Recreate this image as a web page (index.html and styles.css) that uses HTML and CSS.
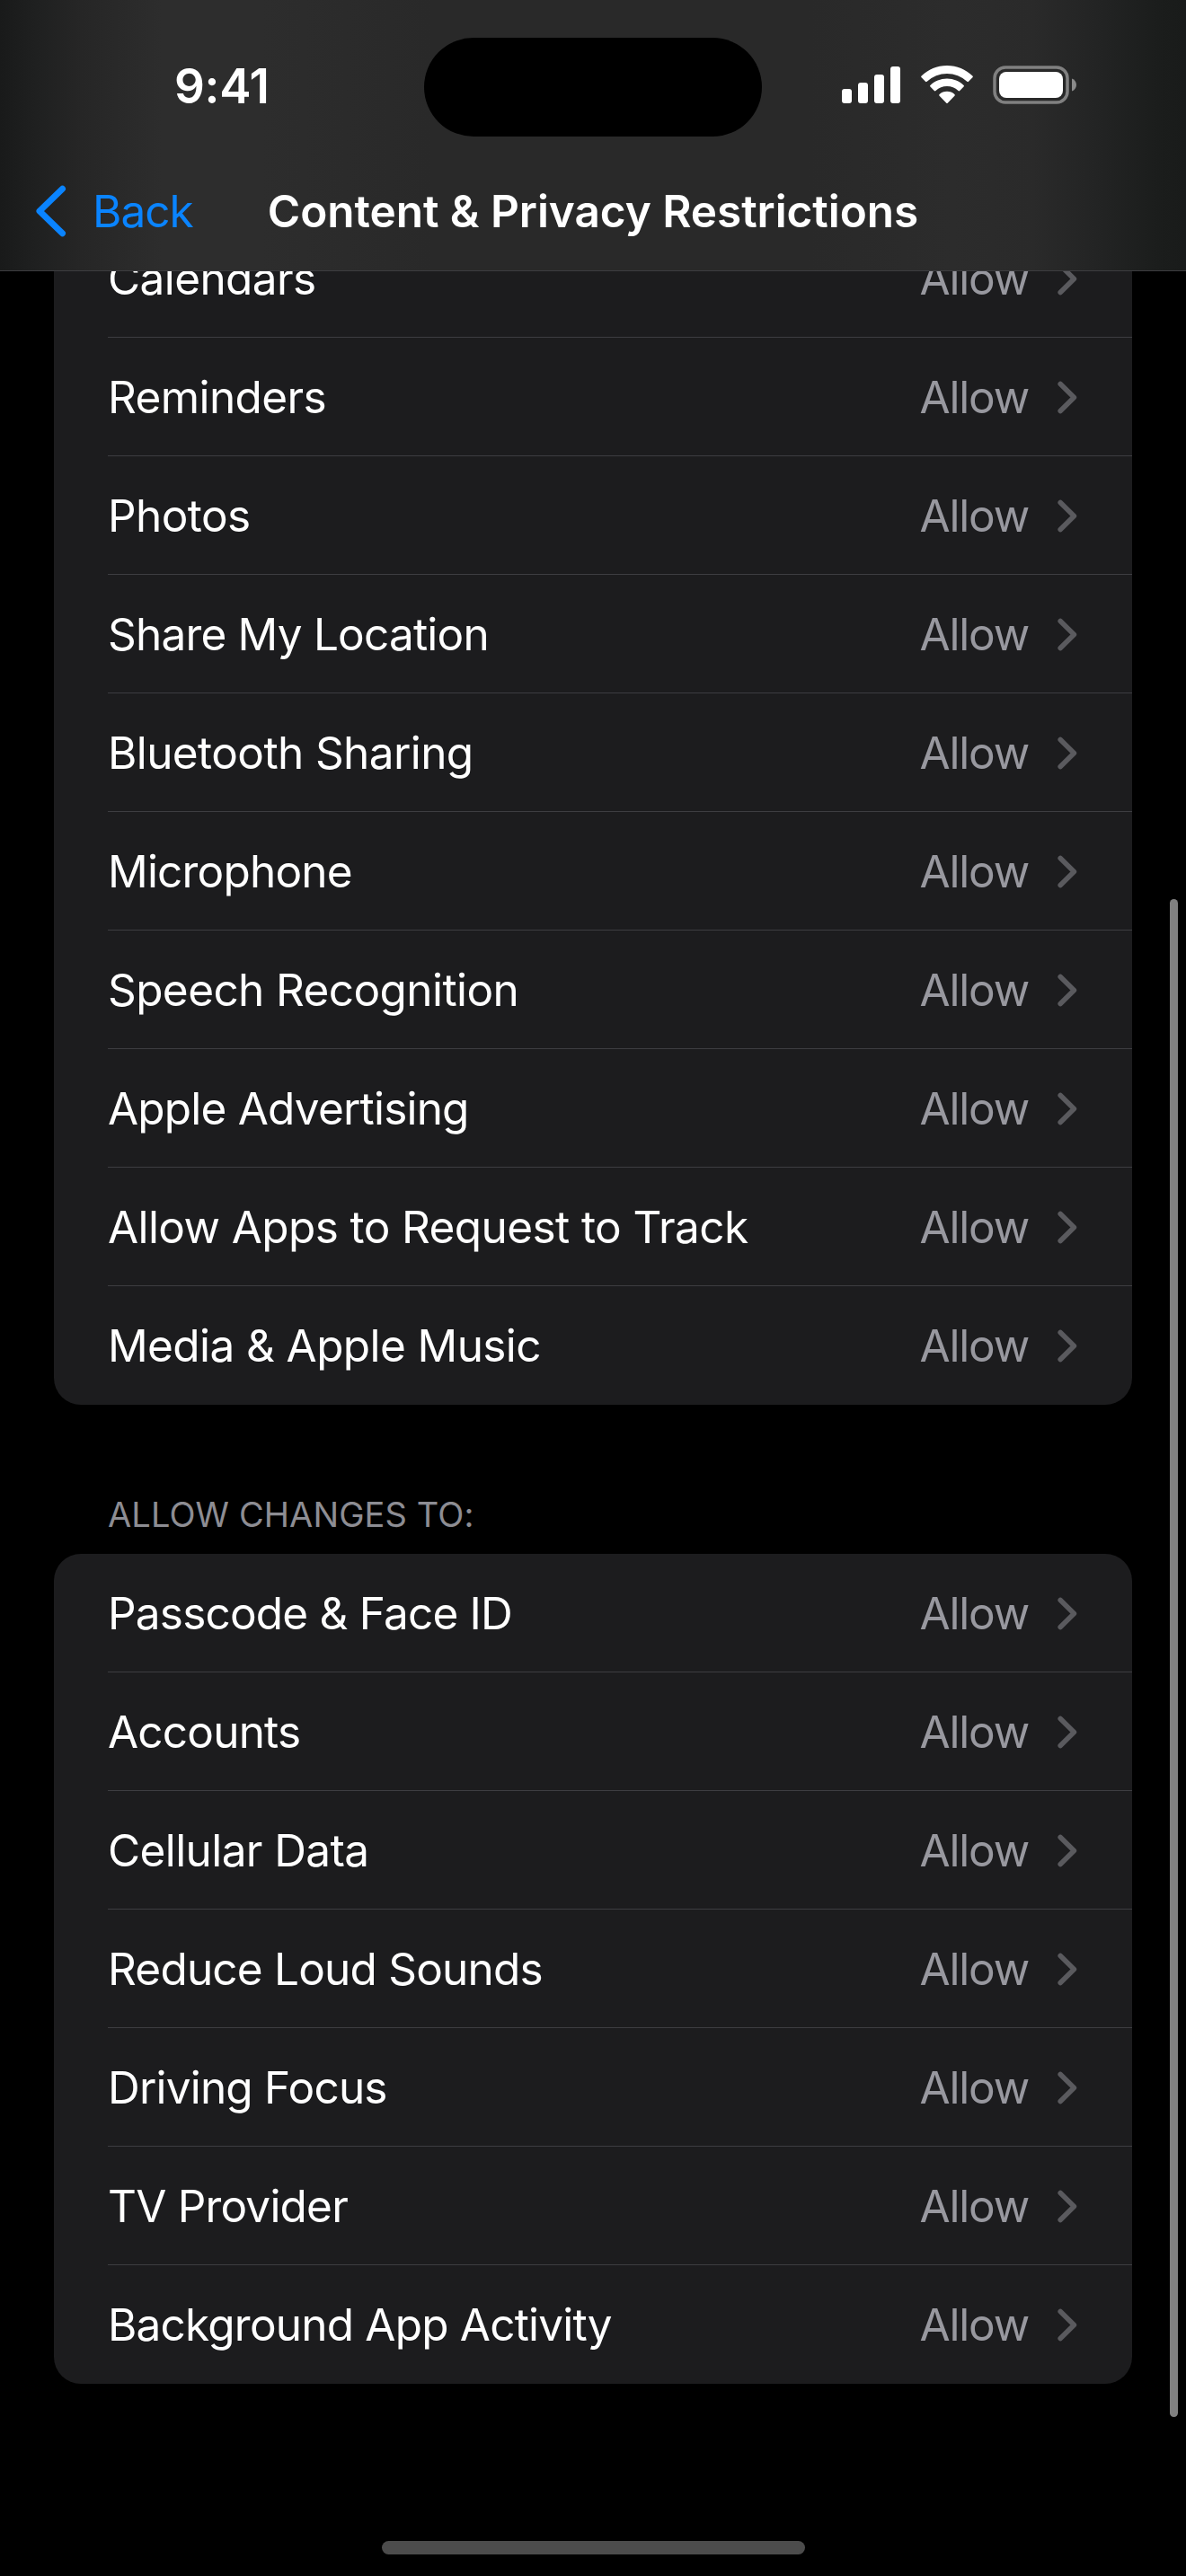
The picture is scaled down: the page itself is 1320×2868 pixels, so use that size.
FILE: index.html
```html
<!DOCTYPE html>
<html lang="en">
<head>
<meta charset="utf-8">
<title>Content &amp; Privacy Restrictions</title>
<link rel="stylesheet" href="styles.css">
</head>
<body>
<svg class="sprite" aria-hidden="true">
  <symbol id="chevron" viewBox="0 0 22 37"><path d="M3.2 3.4 18.400 18.500 3.200 33.600" fill="none" stroke="currentColor" stroke-width="5.600" stroke-linecap="round" stroke-linejoin="round"/></symbol>
</svg>
<div class="screen">
  <header class="header">
    <div class="status">
      <span class="time">9:41</span>
      <span class="island"></span>
      <span class="indicators">
        <svg width="66" height="44" viewBox="0 0 66 44" fill="#fff"><rect x="0" y="26" width="11" height="16" rx="3"/><rect x="18" y="19" width="11" height="23" rx="3"/><rect x="36" y="10" width="11" height="32" rx="3"/><rect x="54" y="1" width="11" height="41" rx="3"/></svg>
        <svg class="wifi" width="58" height="44" viewBox="0 0 58 44" fill="#fff"><path d="M29 0C40 0 50 4.3 57.400 11.600a1.200 1.200 0 0 1 0 1.700L53 17.800a1.200 1.200 0 0 1-1.700 0A32.500 32.500 0 0 0 6.700 17.800a1.200 1.200 0 0 1-1.700 0L.6 13.300a1.200 1.200 0 0 1 0-1.700C8 4.300 18 0 29 0Z"/><path d="M29 14.500C36.200 14.500 42.800 17.300 47.600 21.900a1.200 1.200 0 0 1 0 1.700L43.200 28a1.200 1.200 0 0 1-1.700 0A18.300 18.300 0 0 0 16.500 28a1.200 1.200 0 0 1-1.700 0L10.400 23.600a1.200 1.200 0 0 1 0-1.700C15.200 17.300 21.800 14.500 29 14.500Z"/><path d="M29 28.800c3.300 0 6.200 1.200 8.400 3.100a1.200 1.200 0 0 1 0 1.800L29.900 41.600a1.200 1.200 0 0 1-1.800 0L20.600 33.700a1.200 1.200 0 0 1 0-1.800c2.200-1.900 5.100-3.100 8.400-3.100Z"/></svg>
        <svg width="94" height="44" viewBox="0 0 94 44"><rect x="2" y="2" width="81" height="39" rx="12" fill="none" stroke="#808080" stroke-width="3.500"/><rect x="7" y="7" width="71" height="29" rx="8" fill="#fff"/><path d="M88 14.500c3 1 5 4 5 7s-2 6-5 7Z" fill="#8a8a8a"/></svg>
      </span>
    </div>
    <nav class="nav">
      <a class="back"><svg width="34" height="58" viewBox="0 0 34 58"><path d="M29.500 4.200 4 29 29.500 53.800" fill="none" stroke="currentColor" stroke-width="7" stroke-linecap="round" stroke-linejoin="round"/></svg><span>Back</span></a>
      <h1>Content &amp; Privacy Restrictions</h1>
    </nav>
  </header>
  <main class="content">
    <ul class="card card-top">
      <li><span>Calendars</span><em>Allow</em><svg class="chev"><use href="#chevron"/></svg></li>
      <li><span>Reminders</span><em>Allow</em><svg class="chev"><use href="#chevron"/></svg></li>
      <li><span>Photos</span><em>Allow</em><svg class="chev"><use href="#chevron"/></svg></li>
      <li><span class="tight">Share My Location</span><em>Allow</em><svg class="chev"><use href="#chevron"/></svg></li>
      <li><span>Bluetooth Sharing</span><em>Allow</em><svg class="chev"><use href="#chevron"/></svg></li>
      <li><span class="tight">Microphone</span><em>Allow</em><svg class="chev"><use href="#chevron"/></svg></li>
      <li><span>Speech Recognition</span><em>Allow</em><svg class="chev"><use href="#chevron"/></svg></li>
      <li><span class="tight">Apple Advertising</span><em>Allow</em><svg class="chev"><use href="#chevron"/></svg></li>
      <li><span>Allow Apps to Request to Track</span><em>Allow</em><svg class="chev"><use href="#chevron"/></svg></li>
      <li><span>Media &amp; Apple Music</span><em>Allow</em><svg class="chev"><use href="#chevron"/></svg></li>
    </ul>
    <h2>ALLOW CHANGES TO:</h2>
    <ul class="card">
      <li><span class="tight">Passcode &amp; Face ID</span><em>Allow</em><svg class="chev"><use href="#chevron"/></svg></li>
      <li><span class="tight">Accounts</span><em>Allow</em><svg class="chev"><use href="#chevron"/></svg></li>
      <li><span>Cellular Data</span><em>Allow</em><svg class="chev"><use href="#chevron"/></svg></li>
      <li><span class="tight">Reduce Loud Sounds</span><em>Allow</em><svg class="chev"><use href="#chevron"/></svg></li>
      <li><span class="tight">Driving Focus</span><em>Allow</em><svg class="chev"><use href="#chevron"/></svg></li>
      <li><span class="tight">TV Provider</span><em>Allow</em><svg class="chev"><use href="#chevron"/></svg></li>
      <li><span class="tight">Background App Activity</span><em>Allow</em><svg class="chev"><use href="#chevron"/></svg></li>
    </ul>
  </main>
  <div class="scrollbar"></div>
  <div class="home"></div>
</div>
</body>
</html>
```
FILE: styles.css
```css
* { box-sizing: border-box; margin: 0; padding: 0; }
body { background: #000; color: #fff; font-family: Inter, "Liberation Sans", sans-serif; font-size: 49.5px; }
svg { display: block; flex: none; }
.sprite { position: absolute; width: 0; height: 0; }
.screen { position: relative; width: 1320px; height: 2868px; overflow: hidden; display: flex; flex-direction: column; }

.header { flex: none; height: 302px; border-bottom: 1px solid #3d3d40; background: linear-gradient(90deg, #191a1a 0, #1f2020 40px, #262626 90px, #2d2d2d 180px, #2d2d2d 290px, #292929 480px, #292929 900px, #2c2c2c 1060px, #2a2a2a 1150px, #232424 1220px, #1b1d1c 1290px, #191b1a 100%); }
.status { display: grid; grid-template-columns: 472px 376px 472px; height: 190px; padding-top: 42px; }
.time { padding-left: 194px; font-size: 53px; font-weight: 600; line-height: 108px; letter-spacing: -0.3px; }
.island { height: 110px; border-radius: 55px; background: #000; }
.indicators { display: flex; padding: 31px 0 0 89px; }
.wifi { margin: 0 22px 0 22px; }
.nav { position: relative; height: 90px; display: flex; justify-content: center; align-items: center; }
.back { position: absolute; left: 40px; top: 0; height: 90px; display: flex; align-items: center; gap: 29px; color: #0a84ff; letter-spacing: -1px; }
h1 { font-size: 49.5px; font-weight: 600; letter-spacing: -0.05px; white-space: nowrap; }

.content { flex: 1; overflow: hidden; padding: 0 60px; }
.card { list-style: none; border-radius: 30px; background: #1c1c1e; overflow: hidden; }
.card-top { margin-top: -58px; }
.card li { position: relative; height: 132px; display: flex; align-items: center; padding: 0 61px 0 60px; letter-spacing: -0.6px; white-space: nowrap; }
.card li + li::before { content: ""; position: absolute; left: 60px; right: 0; top: -1px; height: 1px; background: #3d3d41; }
.card span { flex: 1; }
.card .tight { letter-spacing: -0.8px; }
.card em { font-style: normal; color: #98989f; letter-spacing: -1.2px; }
.chev { width: 22px; height: 37px; margin-left: 32px; color: #5a5a5e; }
h2 { height: 166px; padding: 98px 0 0 60px; font-size: 38px; font-weight: 400; line-height: 48px; letter-spacing: 0.1px; color: #8d8d93; }

.scrollbar { position: absolute; left: 1302px; top: 1001px; width: 9px; height: 1690px; border-radius: 5px; background: #808080; }
.home { position: absolute; left: 425px; top: 2829px; width: 471px; height: 15px; border-radius: 8px; background: #4c4c4c; }
```
